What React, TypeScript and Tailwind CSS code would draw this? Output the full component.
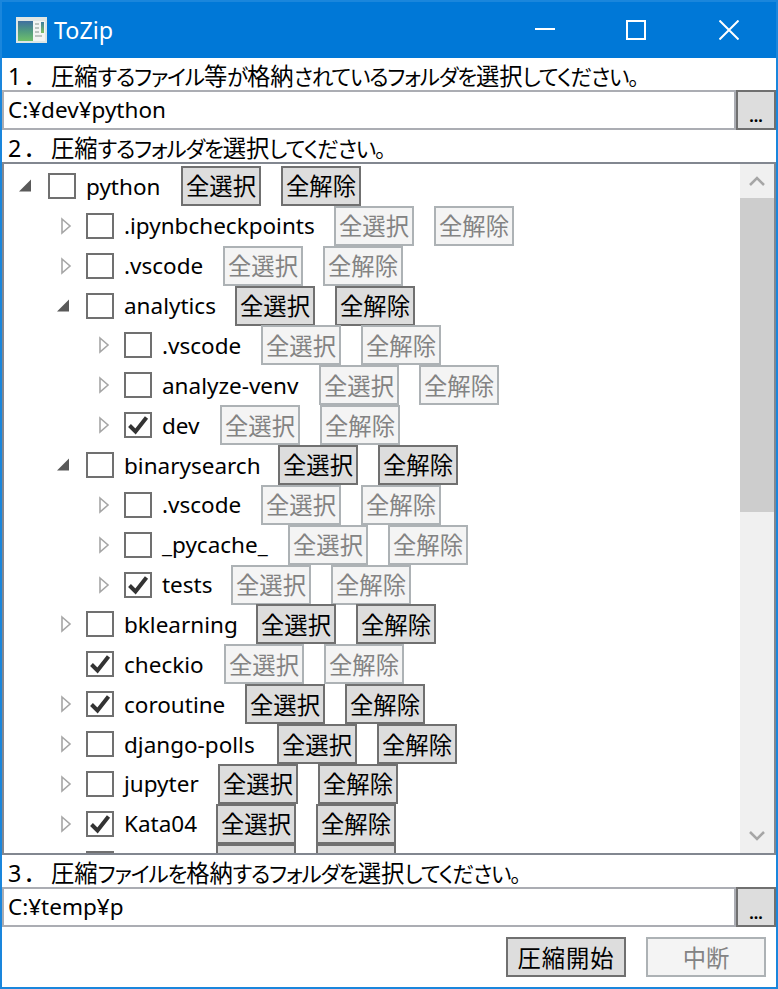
import React from "react";

type Row = { d: 0 | 1 | 2; a?: "open" | "closed"; c?: boolean; n: string; e: boolean; w: string };

const rows: Row[] = [
  { d: 0, a: "open", n: "python", e: true, w: "w-[95px]" },
  { d: 1, a: "closed", n: ".ipynbcheckpoints", e: false, w: "w-[210px]" },
  { d: 1, a: "closed", n: ".vscode", e: false, w: "w-[99px]" },
  { d: 1, a: "open", n: "analytics", e: true, w: "w-[111px]" },
  { d: 2, a: "closed", n: ".vscode", e: false, w: "w-[99px]" },
  { d: 2, a: "closed", n: "analyze-venv", e: false, w: "w-[157px]" },
  { d: 2, a: "closed", c: true, n: "dev", e: false, w: "w-[58px]" },
  { d: 1, a: "open", n: "binarysearch", e: true, w: "w-[154px]" },
  { d: 2, a: "closed", n: ".vscode", e: false, w: "w-[99px]" },
  { d: 2, a: "closed", n: "_pycache_", e: false, w: "w-[126px]" },
  { d: 2, a: "closed", c: true, n: "tests", e: false, w: "w-[69px]" },
  { d: 1, a: "closed", n: "bklearning", e: true, w: "w-[132px]" },
  { d: 1, c: true, n: "checkio", e: false, w: "w-[100px]" },
  { d: 1, a: "closed", c: true, n: "coroutine", e: true, w: "w-[121px]" },
  { d: 1, a: "closed", n: "django-polls", e: true, w: "w-[153px]" },
  { d: 1, a: "closed", n: "jupyter", e: true, w: "w-[94px]" },
  { d: 1, a: "closed", c: true, n: "Kata04", e: true, w: "w-[92px]" },
  { d: 1, n: "", e: true, w: "w-[92px]" },
];

const indent = { 0: "pl-[14px]", 1: "pl-[52px]", 2: "pl-[90px]" };

function Btn({ e, t }: { e: boolean; t: string }) {
  return (
    <div
      className={
        "w-20 h-10 shrink-0 flex items-center justify-center border-2 pt-[2px] text-[23.3px] " +
        (e ? "bg-[#dddddd] border-[#707070] text-black" : "bg-[#f4f4f4] border-[#adb2b5] text-[#838383]")
      }
    >
      {t}
    </div>
  );
}

function Arrow({ a }: { a?: "open" | "closed" }) {
  return (
    <svg width="16" height="18" viewBox="0 0 16 18" className="shrink-0">
      {a === "open" && <path d="M13 2.5V14.5H1Z" fill="#595959" />}
      {a === "closed" && <path d="M6 2L14 9L6 16Z" fill="#fff" stroke="#a6a6a6" strokeWidth="1.6" />}
    </svg>
  );
}

function Check({ c }: { c?: boolean }) {
  return (
    <div className="w-7 h-[26px] shrink-0 border-2 border-[#707070] bg-white flex items-center justify-center">
      {c && (
        <svg width="24" height="22" viewBox="0 0 24 22" className="shrink-0">
          <path d="M3.5 11.5L9.5 17.5L20.5 3.5" fill="none" stroke="#333333" strokeWidth="4" />
        </svg>
      )}
    </div>
  );
}

function Path({ t }: { t: string }) {
  return (
    <div className="h-10 flex">
      <div className="flex-1 border-2 border-[#abadb3] bg-white flex items-center pl-1 text-black text-[22.5px]">{t}</div>
      <div className="w-10 border-2 border-[#707070] bg-[#dddddd] flex items-end justify-center text-[16px] leading-[24px] font-bold text-black">...</div>
    </div>
  );
}

function Jp({ t }: { t: string }) {
  const parts = t.match(/[\u4e00-\u9fff]+|[^\u4e00-\u9fff]+/g) ?? [];
  return (
    <>
      {parts.map((p, i) =>
        /[\u4e00-\u9fff]/.test(p) ? (
          <span key={i}>{p}</span>
        ) : (
          <span key={i} className="text-[21.5px] tracking-[-1.15px]">{p}</span>
        )
      )}
    </>
  );
}

function Label({ n, t }: { n: string; t: string }) {
  return (
    <div className="h-8 flex items-center pt-1 pl-[6px] text-black whitespace-pre">
      <span className="w-[43px] shrink-0 tracking-[4px]">{n}</span>
      <span><Jp t={t} /></span>
    </div>
  );
}

export default function App() {
  return (
    <div
      className="w-[778px] h-[989px] bg-white border-2 border-[#1a86dc] flex flex-col overflow-hidden text-[23.3px] [font-feature-settings:'palt'] font-['Noto_Sans','Noto_Sans_CJK_JP',sans-serif]"
    >
      <div className="h-[56px] shrink-0 bg-[#0078d7] flex items-center text-white relative">
        <svg width="31" height="26" viewBox="0 0 31 26" className="ml-[14px] shrink-0">
          <defs>
            <linearGradient id="g1" x1="0" y1="0" x2="0" y2="1">
              <stop offset="0" stopColor="#3f6f9f" />
              <stop offset="0.5" stopColor="#4f9a80" />
              <stop offset="1" stopColor="#6fbf6a" />
            </linearGradient>
            <linearGradient id="g2" x1="0" y1="0" x2="0" y2="1">
              <stop offset="0" stopColor="#3f7f9f" />
              <stop offset="1" stopColor="#7fbf60" />
            </linearGradient>
          </defs>
          <rect width="31" height="26" fill="#dfe6e4" />
          <rect x="2" y="4" width="15" height="20" fill="url(#g1)" />
          <rect x="17" y="4" width="12" height="20" fill="#f2f5f3" />
          <rect x="25" y="5" width="3" height="11" fill="url(#g2)" />
          <path d="M19 7h4M19 11h4M19 15h4M19 19h7" stroke="#a9b5b0" strokeWidth="1.4" />
        </svg>
        <span className="ml-[7px]">ToZip</span>
        <div className="ml-auto flex items-center">
          <svg width="20" height="20" viewBox="0 0 20 20" className="mr-[71px]"><path d="M0 9h20" stroke="#fff" strokeWidth="2" /></svg>
          <svg width="20" height="20" viewBox="0 0 20 20" className="mr-[73px]"><rect x="1" y="1" width="18" height="18" fill="none" stroke="#fff" strokeWidth="2" /></svg>
          <svg width="20" height="20" viewBox="0 0 20 20" className="mr-[37px]"><path d="M0.5 0.5L19.5 19.5M19.5 0.5L0.5 19.5" stroke="#fff" strokeWidth="2" /></svg>
        </div>
      </div>

      <Label n="1．" t="圧縮するファイル等が格納されているフォルダを選択してください。" />
      <Path t="C:¥dev¥python" />
      <Label n="2．" t="圧縮するフォルダを選択してください。" />

      <div className="h-[693px] shrink-0 border-2 border-[#828790] flex overflow-hidden">
        <div className="flex-1 overflow-hidden pt-[2px]">
          {rows.map((r, i) => (
            <div key={i} className={"h-[39.87px] flex items-center whitespace-nowrap text-black text-[22.5px] " + indent[r.d]}>
              <Arrow a={r.a} />
              <div className="w-[14px] shrink-0" />
              <Check c={r.c} />
              <div className={"ml-[10px] shrink-0 pt-[1px] " + r.w}>{r.n}</div>
              <Btn e={r.e} t={r.n ? "全選択" : ""} />
              <div className="w-5 shrink-0" />
              <Btn e={r.e} t={r.n ? "全解除" : ""} />
            </div>
          ))}
        </div>
        <div className="w-[34px] shrink-0 bg-[#f0f0f0] flex flex-col">
          <div className="h-[34px] flex items-center justify-center">
            <svg width="18" height="12" viewBox="0 0 18 12"><path d="M2 10L9 3L16 10" fill="none" stroke="#a6a6a6" strokeWidth="2.5" /></svg>
          </div>
          <div className="h-[314px] bg-[#cdcdcd]" />
          <div className="flex-1" />
          <div className="h-[34px] flex items-center justify-center">
            <svg width="18" height="12" viewBox="0 0 18 12"><path d="M2 2L9 9L16 2" fill="none" stroke="#a6a6a6" strokeWidth="2.5" /></svg>
          </div>
        </div>
      </div>

      <Label n="3．" t="圧縮ファイルを格納するフォルダを選択してください。" />
      <Path t="C:¥temp¥p" />

      <div className="flex justify-end gap-5 pt-[10px] pr-[10px]">
        <div className="w-[120px] h-10 border-2 bg-[#dddddd] border-[#707070] text-black flex items-center justify-center pt-[2px] tracking-[1px]">圧縮開始</div>
        <div className="w-[120px] h-10 border-2 bg-[#f4f4f4] border-[#adb2b5] text-[#838383] flex items-center justify-center pt-[2px]">中断</div>
      </div>
    </div>
  );
}
